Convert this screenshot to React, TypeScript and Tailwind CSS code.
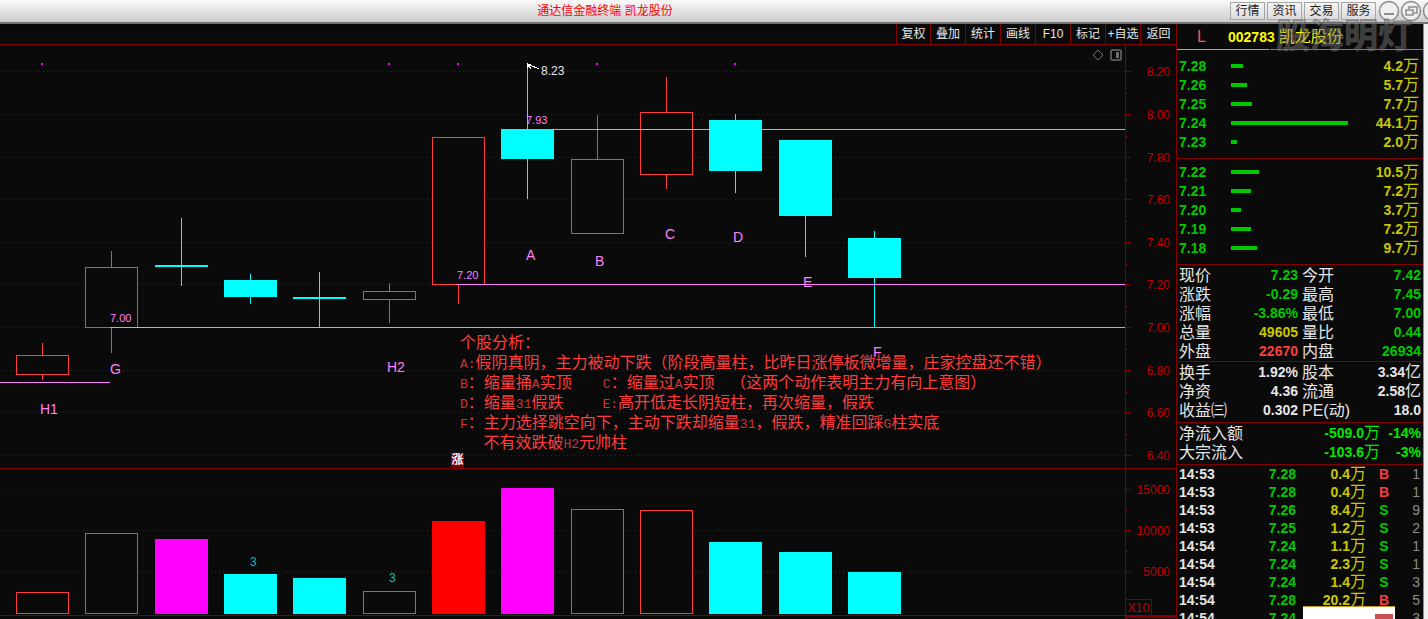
import { clsx } from "clsx";

type Candle = {
  x: number;
  top: number;
  bottom: number;
  high: number;
  low: number;
  up: boolean;
  volume: number;
  volumeFill?: string;
};

const RED = "#ff3c3c";
const CYAN = "#00ffff";
const PINK = "#ff80ff";
const LINE = "#800000";
const BODY_WIDTH = 53;

const candles: Candle[] = [
  { x: 16, top: 310, bottom: 330, high: 298, low: 335, up: true, volume: 22 },
  { x: 85, top: 222, bottom: 283, high: 206, low: 308, up: true, volume: 81 },
  { x: 155, top: 220, bottom: 222, high: 173, low: 241, up: false, volume: 75, volumeFill: "#ff00ff" },
  { x: 224, top: 235, bottom: 252, high: 229, low: 259, up: false, volume: 40 },
  { x: 293, top: 252, bottom: 254, high: 227, low: 282, up: false, volume: 36 },
  { x: 363, top: 246, bottom: 255, high: 238, low: 278, up: true, volume: 23 },
  { x: 432, top: 92, bottom: 240, high: 92, low: 259, up: true, volume: 93, volumeFill: "#ff0000" },
  { x: 501, top: 84, bottom: 114, high: 20, low: 154, up: false, volume: 126, volumeFill: "#ff00ff" },
  { x: 571, top: 114, bottom: 189, high: 70, low: 189, up: true, volume: 105 },
  { x: 640, top: 67, bottom: 130, high: 32, low: 144, up: true, volume: 104 },
  { x: 709, top: 75, bottom: 126, high: 69, low: 148, up: false, volume: 72 },
  { x: 779, top: 95, bottom: 171, high: 95, low: 212, up: false, volume: 62 },
  { x: 848, top: 193, bottom: 233, high: 186, low: 282, up: false, volume: 42 },
];

const priceTicks = [
  { y: 26, label: "8.20" },
  { y: 69, label: "8.00" },
  { y: 112, label: "7.80" },
  { y: 154, label: "7.60" },
  { y: 197, label: "7.40" },
  { y: 239, label: "7.20" },
  { y: 282, label: "7.00" },
  { y: 325, label: "6.80" },
  { y: 367, label: "6.60" },
  { y: 410, label: "6.40" },
];

const volumeTicks = [
  { y: 20, label: "15000" },
  { y: 61, label: "10000" },
  { y: 102, label: "5000" },
];

const levels = [
  { x: 526, y: 84, label: "7.93" },
  { x: 457, y: 239, label: "7.20" },
  { x: 110, y: 282, label: "7.00" },
];

const marks = [
  { x: 40, y: 369, label: "H1" },
  { x: 110, y: 329, label: "G" },
  { x: 387, y: 327, label: "H2" },
  { x: 526, y: 215, label: "A" },
  { x: 595, y: 221, label: "B" },
  { x: 665, y: 194, label: "C" },
  { x: 733, y: 197, label: "D" },
  { x: 803, y: 242, label: "E" },
  { x: 873, y: 312, label: "F" },
];

const notes = [
  "个股分析：",
  "A:假阴真阴，主力被动下跌（阶段高量柱，比昨日涨停板微增量，庄家控盘还不错）",
  "B：缩量捅A实顶    C：缩量过A实顶  （这两个动作表明主力有向上意图）",
  "D：缩量31假跌     E:高开低走长阴短柱，再次缩量，假跌",
  "F：主力选择跳空向下，主动下跌却缩量31，假跌，精准回踩G柱实底",
  "   不有效跌破H2元帅柱",
];

const asks = [
  ["7.28", 12, "4.2"],
  ["7.26", 16, "5.7"],
  ["7.25", 21, "7.7"],
  ["7.24", 117, "44.1"],
  ["7.23", 6, "2.0"],
] as const;

const bids = [
  ["7.22", 28, "10.5"],
  ["7.21", 20, "7.2"],
  ["7.20", 10, "3.7"],
  ["7.19", 20, "7.2"],
  ["7.18", 26, "9.7"],
] as const;

type Tone = "green" | "yellow" | "red" | "white";

const tones: Record<Tone, string> = {
  green: "text-[#00c800]",
  yellow: "text-[#c8c800]",
  red: "text-[#ff3c3c]",
  white: "text-[#e6e6e6]",
};

const quotes: [string, string, Tone, string, string, Tone][] = [
  ["现价", "7.23", "green", "今开", "7.42", "green"],
  ["涨跌", "-0.29", "green", "最高", "7.45", "green"],
  ["涨幅", "-3.86%", "green", "最低", "7.00", "green"],
  ["总量", "49605", "yellow", "量比", "0.44", "green"],
  ["外盘", "22670", "red", "内盘", "26934", "green"],
];

const fundamentals: [string, string, Tone, string, string, Tone][] = [
  ["换手", "1.92%", "white", "股本", "3.34亿", "white"],
  ["净资", "4.36", "white", "流通", "2.58亿", "white"],
  ["收益㈢", "0.302", "white", "PE(动)", "18.0", "white"],
];

const flows = [
  ["净流入额", "-509.0万", "-14%"],
  ["大宗流入", "-103.6万", "-3%"],
];

const trades = [
  ["14:53", "7.28", "0.4", "B", "1"],
  ["14:53", "7.28", "0.4", "B", "1"],
  ["14:53", "7.26", "8.4", "S", "9"],
  ["14:53", "7.25", "1.2", "S", "2"],
  ["14:54", "7.24", "1.1", "S", "1"],
  ["14:54", "7.24", "2.3", "S", "1"],
  ["14:54", "7.24", "1.4", "S", "3"],
  ["14:54", "7.28", "20.2", "B", "5"],
  ["14:54", "7.24", "1.4", "S", "3"],
];

// Digits are bold, Chinese units stay regular and a little larger.
function Num({ children }: { children: string }) {
  return (
    <>
      {children.split(/([\u4e00-\u9fff]+)/).map((part, i) =>
        i % 2 ? (
          <span key={i} className="text-base leading-none font-normal">
            {part}
          </span>
        ) : (
          part
        )
      )}
    </>
  );
}

function TitleBar() {
  return (
    <header className="flex h-6 shrink-0 items-center border-b-2 border-[#757575] bg-gradient-to-b from-[#fafafa] to-[#cdcdcd]">
      <h1 className="flex-1 text-center text-xs text-[#ff0000]">通达信金融终端 凯龙股份</h1>
      <nav className="flex items-center gap-0.5 pl-5 text-xs text-[#222]">
        {["行情", "资讯", "交易", "服务"].map((item) => (
          <button key={item} className="h-[18px] w-[35px] border border-[#a6a6a6] bg-gradient-to-b from-[#f4f4f4] to-[#dcdcdc] leading-4">
            {item}
          </button>
        ))}
      </nav>
      <svg width="52" height="22" fill="none" stroke="#8c8c8c" strokeWidth="1.5" aria-hidden="true">
        <g fill="#efefef">
          <circle cx="13" cy="11" r="9.5" />
          <circle cx="35" cy="11" r="9.5" />
          <circle cx="57" cy="11" r="9.5" />
        </g>
        <path d="M8 14h10" strokeWidth="2" />
        <path d="M33 9V7h8v6h-3M30 10h7v5h-7z" />
      </svg>
    </header>
  );
}

function Toolbar() {
  return (
    <div className="flex h-[21px] shrink-0 justify-end border-b border-[#800000] text-xs text-[#e6e6e6]">
      {["复权", "叠加", "统计", "画线", "F10", "标记", "+自选", "返回"].map((item) => (
        <button key={item} className="w-[35px] border-l border-[#800000] text-center whitespace-nowrap first:w-[34px] last:w-9">
          {item}
        </button>
      ))}
    </div>
  );
}

function GridLines({ ticks }: { ticks: { y: number }[] }) {
  return (
    <>
      {ticks.map(({ y }) => (
        <line key={y} x1="3" x2="100%" y1={y + 0.5} y2={y + 0.5} stroke={LINE} strokeDasharray="1 3" />
      ))}
    </>
  );
}

function Axis({ ticks, height }: { ticks: { y: number; label: string }[]; height: number }) {
  const step = ticks[1].y - ticks[0].y;
  return (
    <svg width="50" height={height} className="box-content block shrink-0 border-l border-[#800000]">
      {ticks.map(({ y, label }, i) => (
        <g key={label}>
          <path d={`M0 ${y + 0.5}h5`} stroke={LINE} />
          {i < ticks.length - 1 ? <path d={`M0 ${y + Math.round(step / 2) + 0.5}h2`} stroke={LINE} /> : null}
          <text x="44" y={y + 5} textAnchor="end" fontSize="12" fill="#c00000">
            {label}
          </text>
        </g>
      ))}
    </svg>
  );
}

function PriceChart() {
  return (
    <section className="relative flex border-b border-[#800000]">
      <svg height="423" className="block min-w-0 flex-1" shapeRendering="crispEdges">
        <GridLines ticks={priceTicks} />
        {candles.map((c) => {
          const color = c.up ? RED : CYAN;
          return (
            <g key={c.x}>
              <path d={`M${c.x + 26.5} ${c.high}V${c.top}M${c.x + 26.5} ${c.bottom}V${c.low}`} stroke={color} />
              {c.up ? (
                <rect x={c.x + 0.5} y={c.top + 0.5} width={BODY_WIDTH - 1} height={c.bottom - c.top - 1} fill="#0a0a0a" stroke={color} />
              ) : (
                <rect x={c.x} y={c.top} width={BODY_WIDTH} height={c.bottom - c.top} fill={color} />
              )}
            </g>
          );
        })}
        {[41, 388, 457, 596, 734].map((x) => (
          <rect key={x} x={x} y="18" width="2" height="2" fill="#ff00ff" />
        ))}
        <line x1="0" x2="110" y1="337.5" y2="337.5" stroke={PINK} />
        {levels.map(({ x, y, label }) => (
          <g key={label}>
            <line x1={x} x2="100%" y1={y + 0.5} y2={y + 0.5} stroke={PINK} />
            <text x={x} y={y - 5} fontSize="11" fill={PINK}>
              {label}
            </text>
          </g>
        ))}
        {marks.map(({ x, y, label }) => (
          <text key={label} x={x} y={y} fontSize="14" fill={PINK}>
            {label}
          </text>
        ))}
        <path d="M527 23v-4l1-1M528 20.500h3l8 3.500M528 20l3 4M528 19h3" fill="none" stroke="#fff" />
        <text x="541" y="30" fontSize="12" fill="#e6e6e6">
          8.23
        </text>
      </svg>
      <Axis ticks={priceTicks} height={423} />
      <svg width="30" height="12" className="absolute top-1 right-[54px]" fill="none" stroke="#6e6e6e" aria-hidden="true">
        <path d="M6 1l5 5-5 5-5-5z" />
        <rect x="19" y="1" width="10" height="10" rx="1" strokeWidth="1.500" />
        <path d="M25.500 3v6" strokeWidth="3" />
      </svg>
      <div className="absolute top-72 left-[460px] text-base leading-5 whitespace-pre text-[#ff3c3c]">
        {notes.map((line) => (
          <p key={line} className="h-5">
            {line.split(/([\x20-\x7e]+)/).map((part, i) =>
              i % 2 ? (
                <span key={i} className="font-['Liberation_Mono',monospace] text-[13px] leading-none text-[#d23232]">
                  {part}
                </span>
              ) : (
                part
              )
            )}
          </p>
        ))}
      </div>
      <span className="absolute top-[409px] left-[451px] h-[13px] w-[13px] bg-[#800000] text-center text-xs leading-[13px] font-bold text-white">涨</span>
    </section>
  );
}

function VolumeChart() {
  return (
    <section className="relative flex border-b border-[#800000]">
      <svg height="146" className="block min-w-0 flex-1" shapeRendering="crispEdges">
        <GridLines ticks={volumeTicks} />
        {candles.map((c) => {
          const fill = c.volumeFill ?? (c.up ? undefined : CYAN);
          return fill ? (
            <rect key={c.x} x={c.x} y={145 - c.volume} width={BODY_WIDTH} height={c.volume} fill={fill} />
          ) : (
            <rect key={c.x} x={c.x + 0.5} y={145.5 - c.volume} width={BODY_WIDTH - 1} height={c.volume - 1} fill="#0a0a0a" stroke={RED} />
          );
        })}
        <g fontSize="12" fill="#00c0c0">
          <text x="250" y="97">3</text>
          <text x="389" y="113">3</text>
        </g>
      </svg>
      <Axis ticks={volumeTicks} height={146} />
      <span className="absolute right-6 bottom-0 h-4 w-[27px] border border-b-0 border-[#800000] bg-[#0a0a0a] text-center text-xs leading-4 text-[#c00000]">X10</span>
    </section>
  );
}

function OrderBook({ rows, label }: { rows: typeof asks | typeof bids; label: string }) {
  return (
    <table className="w-full" aria-label={label}>
      <tbody>
        {rows.map(([price, width, amount]) => (
          <tr key={price} className="h-[19px] leading-[19px]">
            <td className="w-[52px] p-0 font-bold text-[#00c800]">{price}</td>
            <td className="p-0 pb-0.5">
              <span className="block h-1 bg-[#00c800]" style={{ width }} />
            </td>
            <td className="p-0 text-right font-bold text-[#c8c800]">
              <Num>{amount + "万"}</Num>
            </td>
          </tr>
        ))}
      </tbody>
    </table>
  );
}

function StatTable({ rows }: { rows: typeof quotes }) {
  return (
    <table className="w-full table-fixed">
      <tbody>
        {rows.map(([a, av, at, b, bv, bt]) => (
          <tr key={a} className="h-[19px] leading-[19px] whitespace-nowrap">
            <th className="w-[50px] p-0 text-left text-base leading-none font-normal">{a}</th>
            <td className={clsx("p-0 text-right font-bold", tones[at])}>{av}</td>
            <th className="w-[54px] p-0 pl-1 text-left text-base leading-none font-normal">{b}</th>
            <td className={clsx("p-0 text-right font-bold", tones[bt])}>
              <Num>{bv}</Num>
            </td>
          </tr>
        ))}
      </tbody>
    </table>
  );
}

function QuotePanel() {
  return (
    <aside className="relative w-[247px] shrink-0 overflow-hidden border-l border-[#800000] text-sm text-[#e6e6e6]">
      <div className="flex h-[26px] items-center pl-5 text-[#ffff00]">
        <span className="w-[31px] text-base text-[#ff5050]">L</span>
        <span className="font-bold">002783</span>
        <span className="pl-1 text-base">凯龙股份</span>
      </div>
      <div className="-mt-px flex h-px">
        <div className="w-[92px] bg-[#e0a040]" />
        <div className="ml-px flex-1 bg-[#4090e0]" />
      </div>
      <div className="border-b border-[#800000] pt-[7px] pr-1 pb-1.5 pl-0.5">
        <OrderBook rows={asks} label="卖盘" />
      </div>
      <div className="border-b border-[#800000] pt-1 pr-1 pb-1.5 pl-0.5">
        <OrderBook rows={bids} label="买盘" />
      </div>
      <div className="border-b border-[#800000] px-0.5 pt-px">
        <StatTable rows={quotes} />
      </div>
      <div className="border-b border-[#800000] px-0.5 pt-px pb-0.5">
        <StatTable rows={fundamentals} />
      </div>
      <div className="border-b border-[#800000] px-0.5 pt-px pb-0.5">
        <table className="w-full table-fixed">
          <tbody>
            {flows.map(([name, amount, percent]) => (
              <tr key={name} className="h-[19px] leading-[19px] font-bold text-[#00e600]">
                <th className="p-0 text-left text-base leading-none font-normal text-[#e6e6e6]">{name}</th>
                <td className="p-0 text-right">
                  <Num>{amount}</Num>
                </td>
                <td className="w-[41px] p-0 text-right">{percent}</td>
              </tr>
            ))}
          </tbody>
        </table>
      </div>
      <table className="w-full table-fixed" aria-label="成交明细">
        <tbody>
          {trades.map(([time, price, amount, side, count], i) => (
            <tr key={i} className="h-[18px] leading-[18px] font-bold">
              <td className="w-[60px] p-0 pl-0.5">{time}</td>
              <td className="p-0 text-right text-[#00c800]">{price}</td>
              <td className="w-[70px] p-0 text-right text-[#c8c800]">
                <Num>{amount + "万"}</Num>
              </td>
              <td className={clsx("w-9 p-0 text-center", side === "B" ? tones.red : tones.green)}>{side}</td>
              <td className="w-[21px] p-0 pr-[3px] text-right font-normal text-[#8c8c8c]">{count}</td>
            </tr>
          ))}
        </tbody>
      </table>
    </aside>
  );
}

export default function App() {
  return (
    <div className="relative flex h-screen flex-col overflow-hidden bg-[#0a0a0a] font-['Liberation_Sans','Noto_Sans_CJK_SC',sans-serif]">
      <TitleBar />
      <div className="flex min-h-0 flex-1">
        <main className="flex min-w-0 flex-1 flex-col">
          <Toolbar />
          <PriceChart />
          <VolumeChart />
          <div className="ml-auto w-[51px] flex-1 border-t-2 border-l-2 border-[#800000]" />
        </main>
        <QuotePanel />
        <div className="w-[5px] shrink-0 border-l border-[#8c8c8c] bg-[#f0f0f0]" />
      </div>
      <div className="pointer-events-none absolute top-3 right-4 text-[34px] leading-[48px] font-bold text-[#808080]/45 [-webkit-text-stroke:1px_rgba(80,80,80,.6)]">股海明灯</div>
      <div className="absolute right-[33px] bottom-0 flex h-[13px] w-[92px] items-end justify-end border-t border-[#c89632] bg-white pr-0.5">
        <span className="h-[5px] w-[18px] bg-[#c85050]" />
      </div>
    </div>
  );
}
